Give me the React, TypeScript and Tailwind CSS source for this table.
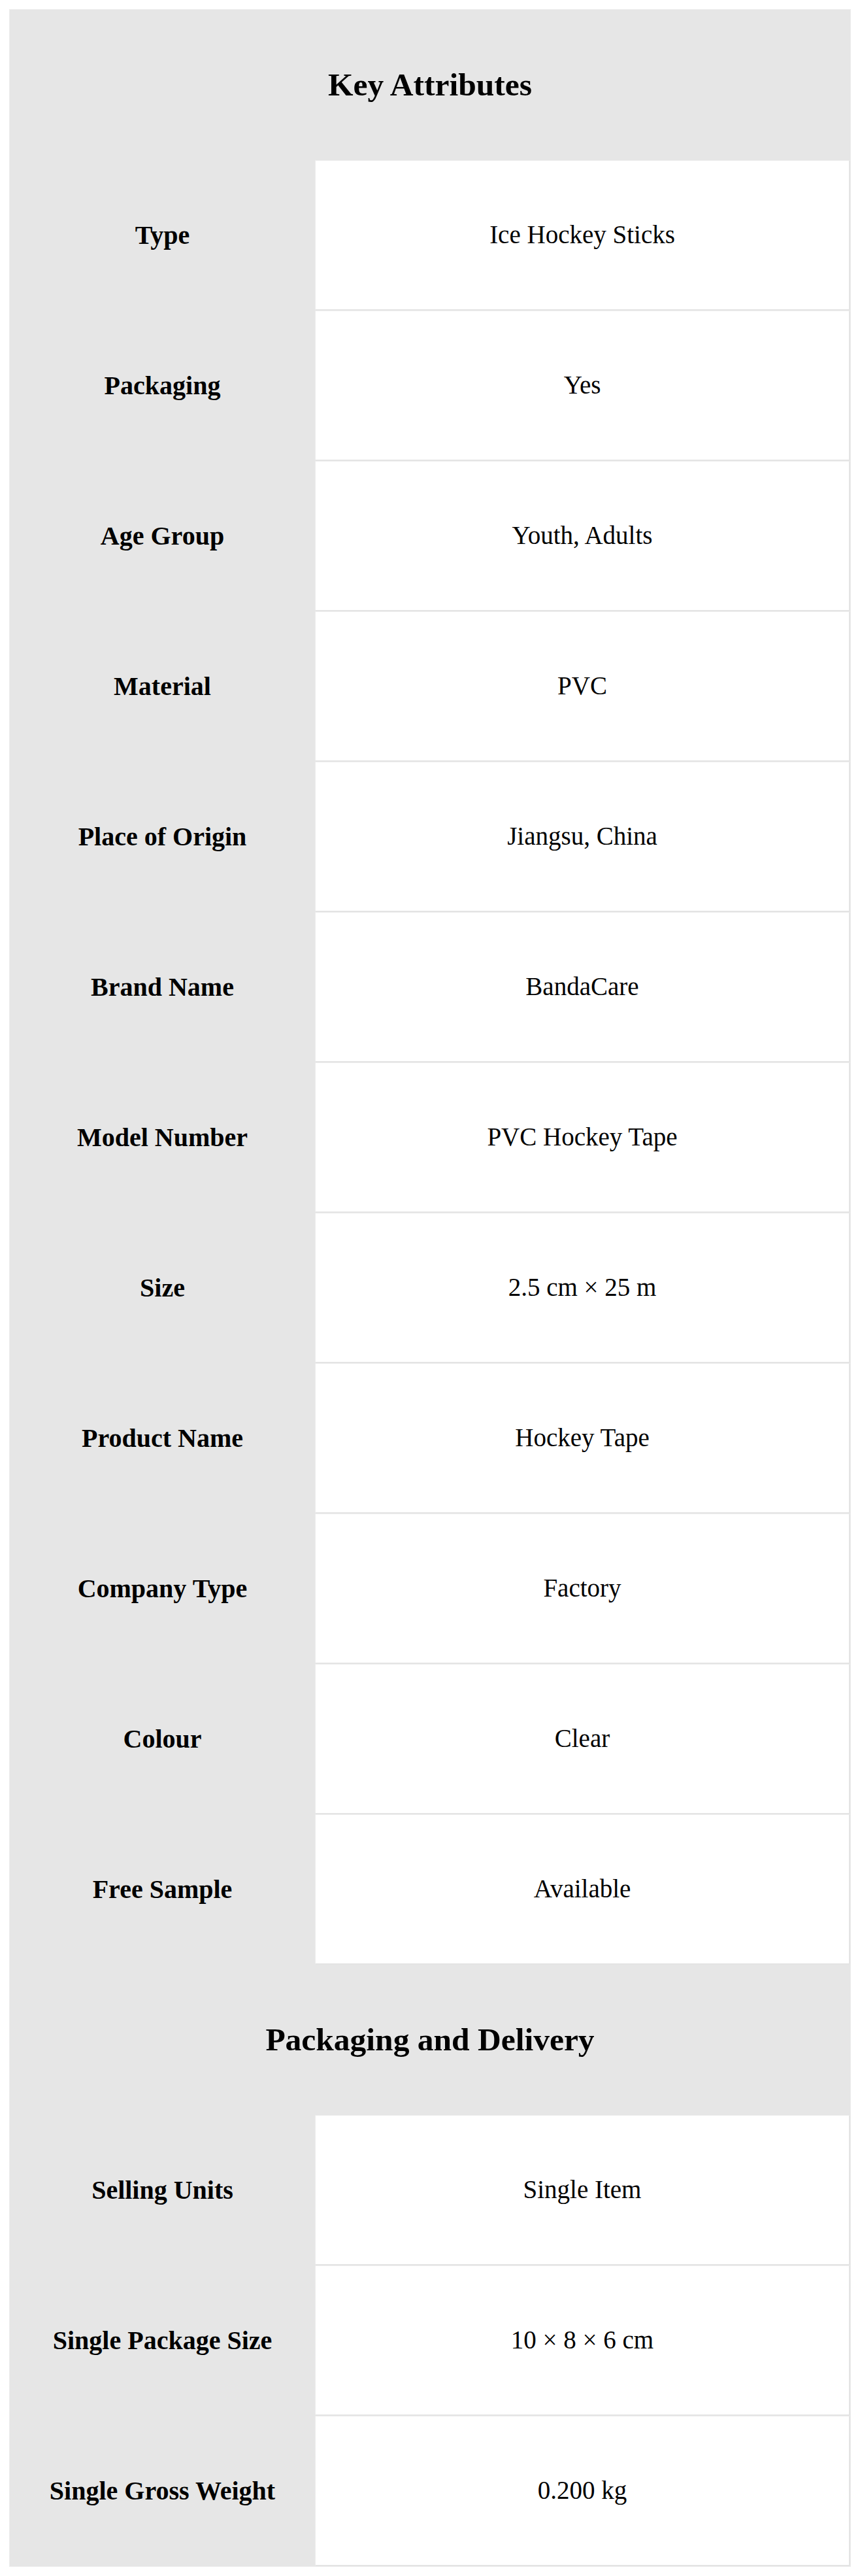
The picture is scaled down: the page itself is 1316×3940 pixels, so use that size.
import React from 'react';

const keyAttributes: [string, string][] = [
  ['Type', 'Ice Hockey Sticks'],
  ['Packaging', 'Yes'],
  ['Age Group', 'Youth, Adults'],
  ['Material', 'PVC'],
  ['Place of Origin', 'Jiangsu, China'],
  ['Brand Name', 'BandaCare'],
  ['Model Number', 'PVC Hockey Tape'],
  ['Size', '2.5 cm × 25 m'],
  ['Product Name', 'Hockey Tape'],
  ['Company Type', 'Factory'],
  ['Colour', 'Clear'],
  ['Free Sample', 'Available'],
];

const packaging: [string, string][] = [
  ['Selling Units', 'Single Item'],
  ['Single Package Size', '10 × 8 × 6 cm'],
  ['Single Gross Weight', '0.200 kg'],
];

const SectionHeader: React.FC<{ title: string }> = ({ title }) => (
  <div className="h-[230px] flex items-center justify-center bg-[#e6e6e6]">
    <h2 className="text-[49.5px] font-bold leading-[1.15]">{title}</h2>
  </div>
);

const Row: React.FC<{ label: string; value: string }> = ({ label, value }) => (
  <div className="flex h-[230px]">
    <div className="w-[467px] shrink-0 bg-[#e6e6e6] flex items-center justify-center text-[40px] font-bold">
      {label}
    </div>
    <div className="flex-1 bg-white flex items-center justify-center text-[39px] border-l border-t border-b-2 border-r-2 border-l-[#ececec] border-t-[#eeeeee] border-b-[#e4e4e4] border-r-[#e4e4e4]">
      {value}
    </div>
  </div>
);

export default function App() {
  return (
    <div
      className="min-h-[3940px] bg-white pt-[14px] pl-[14px] text-black"
      style={{ fontFamily: '"Liberation Serif", "Times New Roman", serif' }}
    >
      <div className="w-[1288px] border border-[#ececec] leading-[1.15]">
        <SectionHeader title="Key Attributes" />
        {keyAttributes.map(([label, value]) => (
          <Row key={label} label={label} value={value} />
        ))}
        <SectionHeader title="Packaging and Delivery" />
        {packaging.map(([label, value]) => (
          <Row key={label} label={label} value={value} />
        ))}
      </div>
    </div>
  );
}
